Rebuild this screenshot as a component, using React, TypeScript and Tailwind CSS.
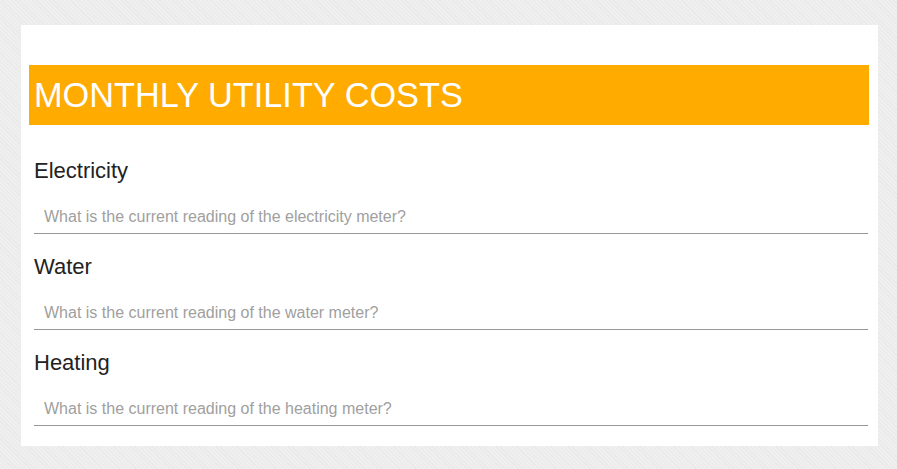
import { useState } from "react";

const FIELDS = [
  { id: "electricity", label: "Electricity", placeholder: "What is the current reading of the electricity meter?" },
  { id: "water", label: "Water", placeholder: "What is the current reading of the water meter?" },
  { id: "heating", label: "Heating", placeholder: "What is the current reading of the heating meter?" },
];

function MeterField({ id, label, placeholder }: { id: string; label: string; placeholder: string }) {
  const [value, setValue] = useState("");
  return (
    <div className="mb-[19px] last:mb-0">
      <label htmlFor={id} className="block h-[36px] text-[22px] leading-[28px] text-[#222]">
        {label}
      </label>
      <input
        id={id}
        type="text"
        value={value}
        onChange={(e) => setValue(e.target.value)}
        placeholder={placeholder}
        className="block w-full h-[41px] pl-[10px] pt-[7px] text-[16px] text-[#333] placeholder:text-[#a0a0a0] border-b border-[#999] outline-none bg-transparent"
      />
    </div>
  );
}

export default function App() {
  return (
    <div
      className="min-h-[469px] w-full pt-[25px] pl-[21px] bg-[repeating-linear-gradient(45deg,#e9e9e9_0px,#e9e9e9_1px,#efefef_1px,#efefef_3px)]"
      style={{ fontFamily: '"Liberation Sans", Arial, sans-serif' }}
    >
      <div className="w-[857px] h-[421px] bg-white pt-[40px] pl-[8px] pr-[9px] pb-[20px]">
        <div className="h-[60px] bg-[#ffab00] flex items-center pl-[5px]">
          <h1 className="text-[34.3px] leading-none text-white">MONTHLY UTILITY COSTS</h1>
        </div>
        <div className="mt-[32px] pl-[5px] pr-[1px]">
          {FIELDS.map((f) => (
            <MeterField key={f.id} {...f} />
          ))}
        </div>
      </div>
    </div>
  );
}
